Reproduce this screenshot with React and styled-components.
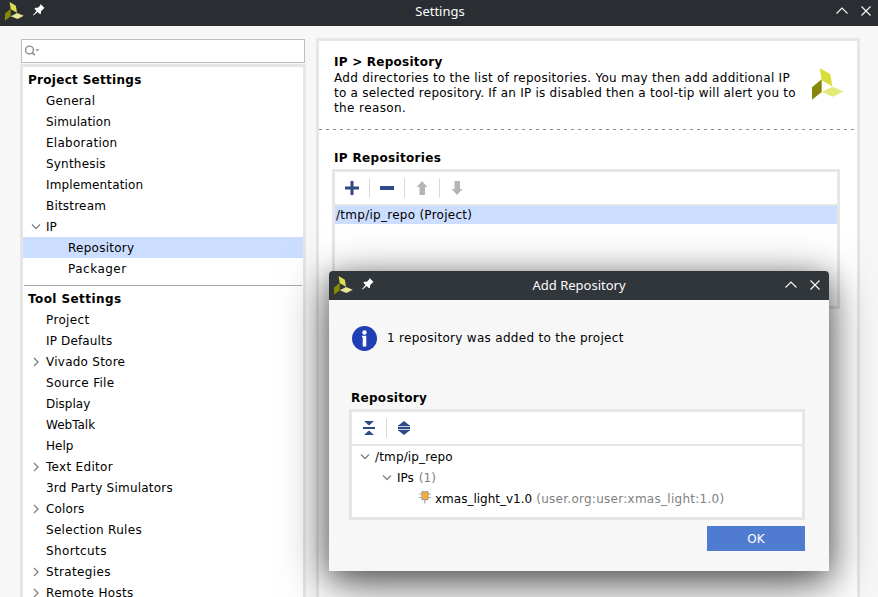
import React from 'react';
import styled, { createGlobalStyle } from 'styled-components';

const Global = createGlobalStyle`
  * { box-sizing: border-box; }
  html, body { margin: 0; width: 878px; height: 597px; overflow: hidden; background: #f7f7f7; }
`;

const Window = styled.div`
  position: relative;
  width: 878px;
  height: 597px;
  overflow: hidden;
  display: flex;
  flex-direction: column;
  background: #f7f7f7;
  color: #000;
  font: 12px/21px 'DejaVu Sans', sans-serif;
  white-space: nowrap;
`;

const TitleBar = styled.header`
  flex: none;
  display: grid;
  grid-template-columns: 1fr auto 1fr;
  align-items: center;
  height: ${p => p.$h}px;
  padding: 0 ${p => p.$right}px ${p => p.$bottom}px 5px;
  background: ${p => p.$bg};
  color: #fcfcfc;
  border-radius: ${p => p.$r || 0}px ${p => p.$r || 0}px 0 0;
`;
const TitleText = styled.h1`
  margin: 0;
  padding-left: ${p => p.$shift}px;
  font: 400 13px/20px 'Noto Sans', sans-serif;
`;
const TitleIcons = styled.div`
  display: flex;
  align-items: center;
  gap: 9px;
`;
const TitleButtons = styled.div`
  display: flex;
  justify-content: flex-end;
  gap: 12px;
`;

const Body = styled.div`
  flex: 1;
  min-height: 0;
  display: flex;
  align-items: flex-start;
`;
const Sidebar = styled.aside`
  flex: none;
  width: 286px;
  margin: 13px 10px 0 20px;
`;
const SearchField = styled.div`
  display: flex;
  align-items: center;
  width: 284px;
  height: 24px;
  margin: 0 1px 1px;
  padding-left: 3px;
  border: 1px solid #bdbdbd;
  background: #fff;
`;
const Tree = styled.nav`
  height: 560px;
  padding-top: 2px;
  border: 3px solid #e6e6e6;
  background: #fff;
`;
const Group = styled.div`
  height: 21px;
  padding: 1px 0 0 5px;
  font-weight: 700;
  letter-spacing: ${p => p.$ls || 0}px;
`;
const Item = styled.div`
  display: flex;
  align-items: center;
  height: 21px;
  padding-left: ${p => (p.$level === 2 ? 45 : 8)}px;
  background: ${p => (p.$selected ? '#ccdeff' : 'transparent')};
`;
const ArrowSlot = styled.span`
  display: flex;
  justify-content: center;
  width: 10px;
  margin-right: 5px;
`;
const Divider = styled.div`
  height: 1px;
  margin: 6px 1px 2px;
  background: #aaa;
`;

const Panel = styled.main`
  flex: none;
  width: 544px;
  height: 620px;
  margin-top: 12px;
  border: 3px solid #e6e6e6;
  background: #fff;
`;
const Intro = styled.section`
  display: flex;
  justify-content: space-between;
  height: 88px;
  padding: 13px 13px 0 15px;
  line-height: 15px;
`;
const Heading = styled.h2`
  margin: 0;
  padding: ${p => p.$above || 1}px 0 ${p => p.$below || 0}px ${p => p.$indent || 0}px;
  font: 700 12px/15px 'DejaVu Sans', sans-serif;
  letter-spacing: ${p => p.$ls || 0}px;
`;
const Line = styled.p`
  margin: 0;
  letter-spacing: ${p => p.$ls || 0}px;
`;
const LogoSlot = styled.div`
  padding-top: 14px;
`;
const Dashes = styled.div`
  height: 1px;
  width: 536px;
  background: repeating-linear-gradient(90deg, #8c8c8c 0 3px, transparent 3px 7px);
`;
const Repositories = styled.section`
  padding: 20px 17px 0 13px;
`;
const Box = styled.div`
  height: ${p => p.$h}px;
  border: 3px solid #e6e6e6;
  background: #fff;
`;
const Toolbar = styled.div`
  display: flex;
  align-items: center;
  height: 34px;
  border-bottom: 2px solid #e6e6e6;
`;
const ToolButton = styled.span`
  display: flex;
  justify-content: center;
  align-items: center;
  width: 34px;
  height: 20px;
  &:not(:last-child) { width: 35px; border-right: 1px solid #d9d9d9; }
`;
const RepoRow = styled.div`
  height: 18px;
  padding-left: 1px;
  background: #ccdeff;
  line-height: 18px;
  letter-spacing: 0.27px;
`;

const Dialog = styled.div`
  position: absolute;
  left: 329px;
  top: 271px;
  width: 500px;
  height: 300px;
  border-radius: 4px 4px 0 0;
  background: #f7f7f7;
  box-shadow: 0 12px 48px rgba(0, 0, 0, 0.6), 0 5px 24px rgba(0, 0, 0, 0.3);
`;
const DialogBody = styled.div`
  display: flex;
  flex-direction: column;
  padding: 26px 24px 0 20px;
`;
const Message = styled.div`
  display: flex;
  align-items: center;
  gap: 10px;
  height: 25px;
  margin: 0 0 38px 3px;
`;
const TreeRow = styled.div`
  display: flex;
  align-items: center;
  height: 21px;
  padding-left: ${p => p.$x}px;
`;
const Label = styled.span`
  padding-top: ${p => (p.$flat ? 0 : 1)}px;
  color: ${p => (p.$muted ? '#808080' : '#000')};
  letter-spacing: ${p => p.$ls || 0}px;
  margin-left: ${p => p.$gap || 0}px;
`;
const OkButton = styled.button`
  align-self: flex-end;
  width: 98px;
  height: 25px;
  margin-top: 6px;
  padding: 1px 0 0;
  border: 0;
  background: #4f7cd1;
  color: #fff;
  font: 12px/24px 'DejaVu Sans', sans-serif;
`;

const Logo = ({ size = 32, bright }) => (
  <svg width={size} height={size} viewBox="0 0 32 32">
    <path d="M7.7 0 18.3 6.3 20.3 18.3 9.7 12.3Z" fill={bright ? '#d7df37' : '#dcdc50'} />
    <path d="M0 19.3 9.7 11.3V24L0 31.7Z" fill="#87870a" />
    <path d="M9.7 24 20.3 18.7 31.7 23.3 21 28.7Z" fill={bright ? '#e3ea7a' : '#e6e696'} />
  </svg>
);
const Pin = () => (
  <svg width="12" height="14" viewBox="0 0 12 14">
    <path d="M7.5 0 11.5 4 10.5 4.8 8 7.3V9.5L7 10.3 4.7 8 0.5 11.5 0 11 3.6 6.9 1.4 4.7 2.4 3.8H4.8L7.2 1.5Z" fill="#fff" />
  </svg>
);
const Up = () => (
  <svg width="12" height="12" viewBox="0 0 12 12"><path d="M0.5 8.5 6 3 11.5 8.5" fill="none" stroke="#fcfcfc" strokeWidth="1.1" /></svg>
);
const Close = () => (
  <svg width="12" height="12" viewBox="0 0 12 12"><path d="M1.5 1.5 10.5 10.5M10.5 1.5 1.5 10.5" fill="none" stroke="#fcfcfc" strokeWidth="1.1" /></svg>
);
const SearchIcon = () => (
  <svg width="15" height="12" viewBox="0 0 15 12">
    <circle cx="4.5" cy="5" r="3.9" fill="none" stroke="#8c8c8c" strokeWidth="1.4" />
    <path d="M7.3 7.8 9.8 10.2" stroke="#8c8c8c" strokeWidth="1.6" />
    <path d="M10.3 4.3H14.3L12.3 6.5Z" fill="#8c8c8c" />
  </svg>
);
const Arrow = ({ open }) => (
  <svg width="10" height="10" viewBox="0 0 10 10">
    <path d={open ? 'M1 2.5 5 6.5 9 2.5' : 'M3 1 7 5 3 9'} fill="none" stroke="#808080" strokeWidth="1.3" />
  </svg>
);
const ToolIcon = ({ kind }) => (
  <svg width="14" height="14" viewBox="0 0 14 14" fill={kind === 'up' || kind === 'down' ? '#b5b5b5' : '#2f4b87'}>
    {kind === 'plus' && <path d="M5.5 0H8.5V5.5H14V8.5H8.5V14H5.5V8.5H0V5.5H5.5Z" />}
    {kind === 'minus' && <path d="M0 5H14V9H0Z" />}
    {kind === 'up' && <path d="M7 0 12.5 6H10V14H4.5V6H1.7Z" />}
    {kind === 'down' && <path d="M7 14 12.5 8H10V0H4.5V8H1.7Z" />}
    {kind === 'collapse' && <path d="M2 0H12L7 4.6ZM1 6H13V8H1ZM2 14H12L7 9.4Z" />}
    {kind === 'expand' && <path d="M7 0 12 4H13V5.2H1V4H2ZM1 6H13V8H1ZM1 8.8H13V10H12L7 14 2 10H1Z" />}
  </svg>
);
const InfoIcon = () => (
  <svg width="25" height="25" viewBox="0 0 25 25">
    <circle cx="12.5" cy="12.5" r="12.5" fill="#203fb4" />
    <circle cx="12.5" cy="6.5" r="2.2" fill="#fff" />
    <path d="M10 9.7H14.3V20.5H10.7V11.3H10Z" fill="#fff" />
  </svg>
);
const IpIcon = () => (
  <svg width="12" height="15" viewBox="0 0 12 15">
    <path d="M0 3H12M0 6.5H12M5.8 8V12.5" stroke="#aaa" strokeWidth="1.2" />
    <rect x="3" y="0.7" width="6" height="8" fill="#ffad29" stroke="#999" />
  </svg>
);

const project = [
  { name: 'General', ls: 0.3 },
  { name: 'Simulation', ls: 0.1 },
  { name: 'Elaboration', ls: 0.27 },
  { name: 'Synthesis', ls: 0.2 },
  { name: 'Implementation', ls: 0.14 },
  { name: 'Bitstream', ls: 0.2 },
  { name: 'IP', kind: 'open' },
  { name: 'Repository', kind: 'child', selected: true, ls: 0.25 },
  { name: 'Packager', kind: 'child', ls: 0.5 },
];
const tool = [
  { name: 'Project', ls: 0.35 },
  { name: 'IP Defaults', ls: 0.15 },
  { name: 'Vivado Store', kind: 'closed', ls: 0.25 },
  { name: 'Source File', ls: 0.3 },
  { name: 'Display' },
  { name: 'WebTalk' },
  { name: 'Help' },
  { name: 'Text Editor', kind: 'closed', ls: 0.3 },
  { name: '3rd Party Simulators', ls: 0.22 },
  { name: 'Colors', kind: 'closed', ls: 0.15 },
  { name: 'Selection Rules', ls: 0.3 },
  { name: 'Shortcuts', ls: 0.38 },
  { name: 'Strategies', kind: 'closed', ls: 0.35 },
  { name: 'Remote Hosts', kind: 'closed', ls: 0.33 },
];

const Items = ({ list }) => list.map(({ name, kind, selected, ls }) => (
  <Item key={name} $level={kind === 'child' ? 2 : 1} $selected={selected}>
    {kind !== 'child' && (
      <ArrowSlot>{kind && <Arrow open={kind === 'open'} />}</ArrowSlot>
    )}
    <Label $ls={ls}>{name}</Label>
  </Item>
));

const Title = ({ children, shift, ...rest }) => (
  <TitleBar {...rest}>
    <TitleIcons><Logo size={19} /><Pin /></TitleIcons>
    <TitleText $shift={shift}>{children}</TitleText>
    <TitleButtons><Up /><Close /></TitleButtons>
  </TitleBar>
);

export default function App() {
  return (
    <Window>
      <Global />
      <Title $h={26} $bg="#2a2e32" $right={6} $bottom={4} shift={3}>Settings</Title>
      <Body>
        <Sidebar>
          <SearchField><SearchIcon /></SearchField>
          <Tree>
            <Group $ls={0.3}>Project Settings</Group>
            <Items list={project} />
            <Divider />
            <Group $ls={0.42}>Tool Settings</Group>
            <Items list={tool} />
          </Tree>
        </Sidebar>
        <Panel>
          <Intro>
            <div>
              <Heading $ls={0.24} $below={1}>IP &gt; Repository</Heading>
              <Line $ls={0.28}>Add directories to the list of repositories. You may then add additional IP</Line>
              <Line $ls={0.24}>to a selected repository. If an IP is disabled then a tool-tip will alert you to</Line>
              <Line $ls={0.4}>the reason.</Line>
            </div>
            <LogoSlot><Logo bright /></LogoSlot>
          </Intro>
          <Dashes />
          <Repositories>
            <Heading $ls={0.33} $indent={2} $below={3}>IP Repositories</Heading>
            <Box $h={140}>
              <Toolbar>
                {['plus', 'minus', 'up', 'down'].map(k => <ToolButton key={k}><ToolIcon kind={k} /></ToolButton>)}
              </Toolbar>
              <RepoRow>/tmp/ip_repo (Project)</RepoRow>
            </Box>
          </Repositories>
        </Panel>
      </Body>
      <Dialog role="dialog">
        <Title $h={29} $bg="#31363b" $r={4} $right={8} $bottom={1} shift={3}>Add Repository</Title>
        <DialogBody>
          <Message><InfoIcon /><Label $flat $ls={0.3}>1 repository was added to the project</Label></Message>
          <Heading $ls={0.3} $indent={2} $above={2} $below={3}>Repository</Heading>
          <Box $h={111}>
            <Toolbar>
              {['collapse', 'expand'].map(k => <ToolButton key={k}><ToolIcon kind={k} /></ToolButton>)}
            </Toolbar>
            <TreeRow $x={8}><Arrow open /><Label $gap={5} $ls={0.15}>/tmp/ip_repo</Label></TreeRow>
            <TreeRow $x={30}><Arrow open /><Label $gap={5}>IPs</Label><Label $muted $gap={5}>(1)</Label></TreeRow>
            <TreeRow $x={67}><IpIcon /><Label $gap={4}>xmas_light_v1.0</Label><Label $muted $gap={4} $ls={0.27}>(user.org:user:xmas_light:1.0)</Label></TreeRow>
          </Box>
          <OkButton>OK</OkButton>
        </DialogBody>
      </Dialog>
    </Window>
  );
}
